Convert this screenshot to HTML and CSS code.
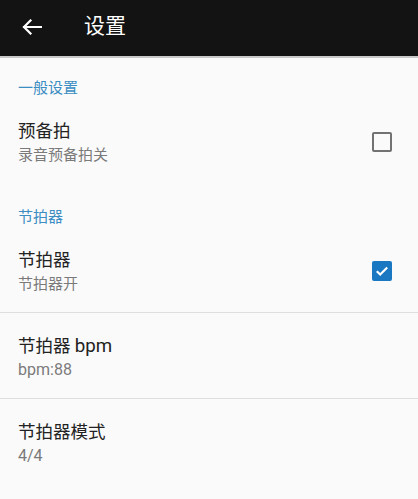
FILE: index.html
```html
<!DOCTYPE html>
<html lang="zh">
<head>
<meta charset="utf-8">
<link rel="stylesheet" href="styles.css">
</head>
<body>
<header class="appbar">
  <svg class="back" width="20" height="16" viewBox="0 0 20 16">
    <path d="M19 8H2M8.5 1.5L2 8l6.5 6.5" fill="none" stroke="#fff" stroke-width="2.2" stroke-linecap="square"/>
  </svg>
  <h1 class="title">设置</h1>
</header>
<main class="list">
  <div class="cat">一般设置</div>
  <div class="item">
    <div class="texts">
      <div class="t">预备拍</div>
      <div class="s">录音预备拍关</div>
    </div>
    <span class="cb"></span>
  </div>
  <div class="cat">节拍器</div>
  <div class="item">
    <div class="texts">
      <div class="t">节拍器</div>
      <div class="s">节拍器开</div>
    </div>
    <span class="cb on">
      <svg width="20" height="20" viewBox="0 0 20 20"><path d="M4.8 10.2l3.4 3.3 7-7" fill="none" stroke="#fff" stroke-width="2.2"/></svg>
    </span>
  </div>
  <div class="divider"></div>
  <div class="item">
    <div class="texts">
      <div class="t">节拍器 <span class="lat">bpm</span></div>
      <div class="s"><span class="lat">bpm:88</span></div>
    </div>
  </div>
  <div class="divider"></div>
  <div class="item">
    <div class="texts">
      <div class="t">节拍器模式</div>
      <div class="s"><span class="lat">4/4</span></div>
    </div>
  </div>
</main>
</body>
</html>
```
FILE: styles.css
```css
html, body {
  margin: 0;
  padding: 0;
  background: #fafafa;
  font-family: Roboto, "Noto Sans CJK SC", "Noto Sans", sans-serif;
}
.appbar {
  height: 56px;
  background: #131313;
  display: flex;
  align-items: center;
  border-bottom: 2px solid #c9c9c9;
  box-sizing: content-box;
}
.back {
  margin-left: 22px;
  margin-top: -2px;
}
.title {
  margin: 0 0 0 42px;
  font-size: 21px;
  font-weight: 400;
  color: #fff;
  line-height: 24px;
  margin-top: -4px;
}
.list {
  display: flex;
  flex-direction: column;
}
.cat {
  padding: 20px 18px 0;
  font-size: 15px;
  line-height: 20px;
  color: #3b8dc2;
}
.item + .cat {
  padding-top: 24px;
}
.item {
  display: flex;
  align-items: center;
  padding: 21px 26px 16px 18px;
}
.texts {
  flex: 1;
}
.t {
  font-size: 17.5px;
  line-height: 24px;
  color: #222;
}
.s {
  font-size: 15px;
  line-height: 24px;
  color: #7a7a7a;
}
.lat {
  font-size: 1.07em;
}
.cb {
  width: 20px;
  height: 20px;
  box-sizing: border-box;
  border: 2.5px solid #727272;
  border-radius: 2px;
  margin-top: -2px;
}
.cb.on {
  border: none;
  background: #1a78c2;
  display: flex;
}
.divider {
  height: 1px;
  background: #dedede;
}
```
